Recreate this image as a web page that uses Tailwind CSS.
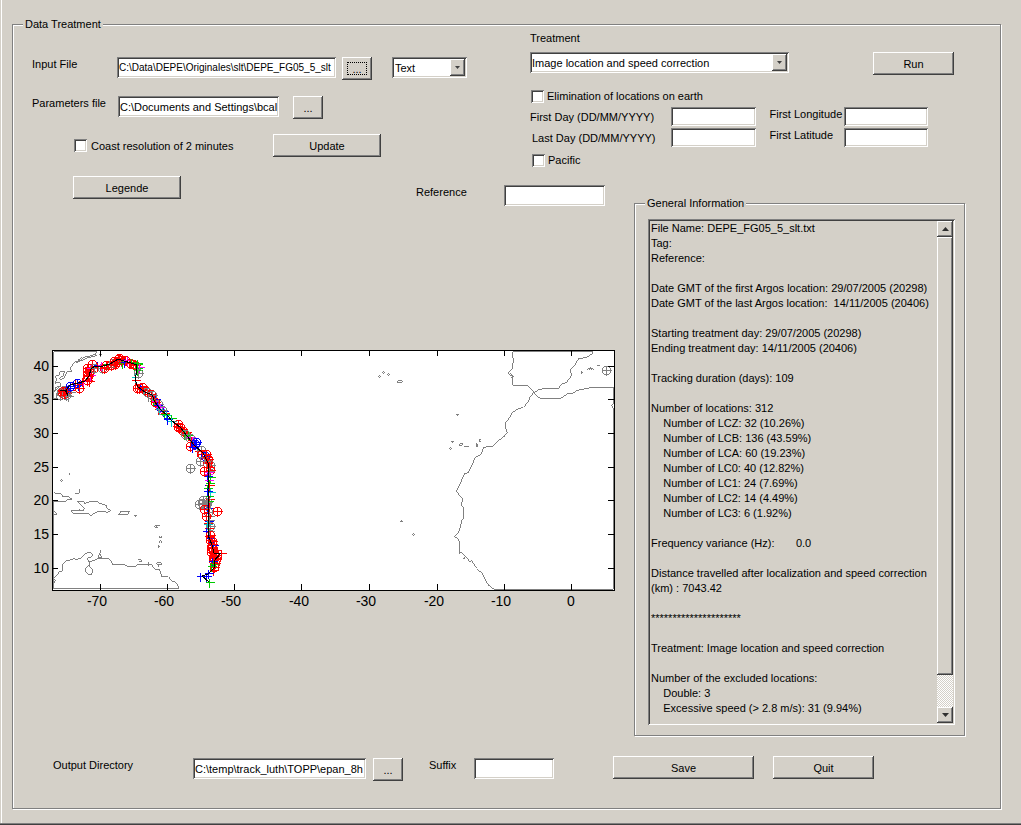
<!DOCTYPE html>
<html lang="en">
<head>
<meta charset="utf-8">
<title>Data Treatment</title>
<script src="https://cdn.jsdelivr.net/npm/@tailwindcss/browser@4"></script>
</head>
<body class="bg-[#d4d0c8]">
<main class="flex min-h-screen flex-col bg-[#d4d0c8] pt-[17px] pr-[20px] pb-[16px] pl-[12px] font-['Liberation_Sans',Arial,sans-serif] text-[11px] leading-[14px] text-black shadow-[inset_0_-1px_#404040,inset_0_-2px_#808080,inset_1px_0_#d4d0c8,inset_2px_0_#fff]">
<fieldset class="min-w-0 flex-1 border border-[#808080] shadow-[inset_1px_1px_#fff,1px_1px_#fff]">
  <legend class="ml-[10px] bg-[#d4d0c8] px-[2px]">Data Treatment</legend>

  <!-- File choices and treatment settings -->
  <div class="grid grid-cols-[517fr_470fr]">
    <div class="flex flex-col pt-[26px] pl-[19px]">
      <div class="flex items-start pr-[63px]">
        <label for="inputFile" class="w-[85px]">Input File</label>
        <input id="inputFile" type="text" value="C:\Data\DEPE\Originales\slt\DEPE_FG05_5_slt" class="h-[21px] min-w-0 flex-1 bg-white px-[2px] text-[10px] shadow-[inset_1px_1px_#808080,inset_-1px_-1px_#fff,inset_2px_2px_#404040,inset_-2px_-2px_#d4d0c8]">
        <button type="button" aria-label="Browse input file" class="ml-[6px] flex h-[23px] w-[30px] p-[5px] shadow-[inset_-1px_-1px_#404040,inset_1px_1px_#fff,inset_-2px_-2px_#808080]"><span class="flex-1 self-stretch border border-dotted border-black leading-[13px]">...</span></button>
        <div class="relative ml-[20px] w-[75px]">
          <select aria-label="Format" class="block h-[21px] w-full appearance-none bg-white px-[3px] shadow-[inset_1px_1px_#808080,inset_-1px_-1px_#fff,inset_2px_2px_#404040,inset_-2px_-2px_#d4d0c8]"><option>Text</option></select>
          <span class="pointer-events-none absolute top-[2px] right-[2px] flex h-[17px] w-[15px] items-center justify-center bg-[#d4d0c8] shadow-[inset_-1px_-1px_#404040,inset_1px_1px_#fff,inset_-2px_-2px_#808080]"><svg width="5" height="3" viewBox="0 0 5 3"><path d="M0 0H5L2.500 3Z" fill="#404040"/></svg></span>
        </div>
      </div>
      <div class="mt-[16px] flex items-start pr-[207px]">
        <label for="paramFile" class="w-[86px]">Parameters file</label>
        <input id="paramFile" type="text" value="C:\Documents and Settings\bcalmettes" class="h-[21px] min-w-0 flex-1 bg-white px-[2px] shadow-[inset_1px_1px_#808080,inset_-1px_-1px_#fff,inset_2px_2px_#404040,inset_-2px_-2px_#d4d0c8]">
        <button type="button" aria-label="Browse parameters file" class="ml-[14px] h-[23px] w-[30px] shadow-[inset_-1px_-1px_#404040,inset_1px_1px_#fff,inset_-2px_-2px_#808080]">...</button>
      </div>
      <div class="mt-[15px] flex items-center pl-[42px]">
        <label class="flex w-[199px] items-center gap-[4px]"><input type="checkbox" class="size-[13px] appearance-none bg-white shadow-[inset_1px_1px_#808080,inset_-1px_-1px_#fff,inset_2px_2px_#404040,inset_-2px_-2px_#d4d0c8]">Coast resolution of 2 minutes</label>
        <button type="button" class="h-[23px] w-[108px] shadow-[inset_-1px_-1px_#404040,inset_1px_1px_#fff,inset_-2px_-2px_#808080]">Update</button>
      </div>
    </div>

    <div class="flex flex-col items-stretch">
      <label for="treatment">Treatment</label>
      <div class="mt-[7px] flex items-start pr-[46px]">
        <div class="relative min-w-0 flex-1">
          <select id="treatment" class="block h-[21px] w-full appearance-none bg-white px-[2px] shadow-[inset_1px_1px_#808080,inset_-1px_-1px_#fff,inset_2px_2px_#404040,inset_-2px_-2px_#d4d0c8]"><option>Image location and speed correction</option></select>
          <span class="pointer-events-none absolute top-[2px] right-[2px] flex h-[17px] w-[15px] items-center justify-center bg-[#d4d0c8] shadow-[inset_-1px_-1px_#404040,inset_1px_1px_#fff,inset_-2px_-2px_#808080]"><svg width="5" height="3" viewBox="0 0 5 3"><path d="M0 0H5L2.500 3Z" fill="#404040"/></svg></span>
        </div>
        <button type="button" class="ml-[84px] h-[23px] w-[81px] shadow-[inset_-1px_-1px_#404040,inset_1px_1px_#fff,inset_-2px_-2px_#808080]">Run</button>
      </div>
      <label class="mt-[14px] flex items-center gap-[3px] pl-px"><input type="checkbox" class="size-[13px] appearance-none bg-white shadow-[inset_1px_1px_#808080,inset_-1px_-1px_#fff,inset_2px_2px_#404040,inset_-2px_-2px_#d4d0c8]">Elimination of locations on earth</label>
      <div class="mt-[4px] grid grid-cols-[141px_1fr_74px_1fr] items-start gap-y-[2px] pr-[58px]">
        <label for="firstDay" class="self-center">First Day (DD/MM/YYYY)</label>
        <input id="firstDay" type="text" class="mr-[14px] h-[19px] min-w-0 bg-white px-[3px] shadow-[inset_1px_1px_#808080,inset_-1px_-1px_#fff,inset_2px_2px_#404040,inset_-2px_-2px_#d4d0c8]">
        <label for="firstLon">First Longitude</label>
        <input id="firstLon" type="text" class="mr-[14px] h-[19px] min-w-0 bg-white px-[3px] shadow-[inset_1px_1px_#808080,inset_-1px_-1px_#fff,inset_2px_2px_#404040,inset_-2px_-2px_#d4d0c8]">
        <label for="lastDay" class="self-center pl-[2px]">Last Day (DD/MM/YYYY)</label>
        <input id="lastDay" type="text" class="mr-[14px] h-[19px] min-w-0 bg-white px-[3px] shadow-[inset_1px_1px_#808080,inset_-1px_-1px_#fff,inset_2px_2px_#404040,inset_-2px_-2px_#d4d0c8]">
        <label for="firstLat">First Latitude</label>
        <input id="firstLat" type="text" class="mr-[14px] h-[19px] min-w-0 bg-white px-[3px] shadow-[inset_1px_1px_#808080,inset_-1px_-1px_#fff,inset_2px_2px_#404040,inset_-2px_-2px_#d4d0c8]">
      </div>
      <label class="mt-[6px] flex items-center gap-[3px] pl-[2px]"><input type="checkbox" class="size-[13px] appearance-none bg-white shadow-[inset_1px_1px_#808080,inset_-1px_-1px_#fff,inset_2px_2px_#404040,inset_-2px_-2px_#d4d0c8]">Pacific</label>
    </div>
  </div>

  <!-- Map and report -->
  <div class="mt-[9px] grid grid-cols-[621fr_366fr]">
    <div>
      <div class="flex items-start pr-[29px] pl-[60px]">
        <button type="button" class="h-[23px] w-[108px] shadow-[inset_-1px_-1px_#404040,inset_1px_1px_#fff,inset_-2px_-2px_#808080]">Legende</button>
        <div class="ml-auto flex items-start pt-[9px]">
          <label for="reference" class="w-[88px]">Reference</label>
          <input id="reference" type="text" class="h-[21px] w-[101px] bg-white px-[3px] shadow-[inset_1px_1px_#808080,inset_-1px_-1px_#fff,inset_2px_2px_#404040,inset_-2px_-2px_#d4d0c8]">
        </div>
      </div>
      <div class="pt-[139px] pr-[14px] pl-[17px]">
        <svg viewBox="30 345 590 265" class="block w-full" role="img" aria-label="Map of Argos locations in the Atlantic" shape-rendering="crispEdges">
          <rect x="52" y="350" width="563" height="241" fill="#fff"/>
          <g fill="none" stroke="#808080" stroke-width="3">
            <!-- Africa, Iberia and eastern islands -->
            <g transform="translate(360 340) scale(.33333)">
              <path d="M402 748L385 735L377 722L368 702L350 685L335 662L330 666L318 650L305 637L298 640V605L292 594L283 590L292 583L300 565L305 542L311 535V502L305 497V487L310 480L300 468L289 454L300 432L313 402L325 398L335 378L345 353L362 343L372 322L400 318L415 302L432 290L442 278L437 265V248L452 228L455 218L475 207L490 202L503 188L510 172L520 158L540 175H602L625 160H638L650 152L665 148L700 142H760V190L754 197L760 204V748H402"/>
              <path d="M458 35V50L461 60L458 75V86L446 95V102L458 110V136H500L510 143L522 158L535 150L550 146H595L605 133L620 127L625 120L636 105L630 90L645 74L655 57L680 52L698 40V35H458"/>
              <path d="M449 100L455 104L460 110L453 112M58 106L61 110L57 112L55 109ZM70 95L74 98L70 101L67 98ZM85 101L89 104L85 107L82 104ZM115 122H124L128 125L124 128H115L111 125ZM288 223H297M292 226V228M274 304H281M277 306V308M271 322L275 326L271 329L268 326ZM296 314L304 318L309 309L303 311ZM312 319H326M350 310L355 315L351 320L348 315ZM360 298L364 302L358 305ZM124 540V544M120 544H128M160 580L164 584L160 587L157 584ZM313 650V656M309 655H314M664 94V101L669 98M682 89L690 84H694L703 89M686 91L691 84L696 91M712 78H719"/>
            </g>
            <!-- North American coast -->
            <g transform="translate(20 340) scale(.33333)">
              <path d="M102 35H230L227 43L210 48L190 52L182 62L165 65M230 47L205 53L188 60L170 68L175 60L185 52M165 65L150 85L155 94H142L132 114L121 120L119 113L130 107L133 94L120 95L118 105L104 110L111 119L104 130L119 126L122 138L108 142L101 158L118 140M242 43L238 45M242 47V51M236 45H246M150 400V404M123 419H127M100 35V175H115"/>
            </g>
            <!-- Antilles and South American coast -->
            <g transform="translate(20 460) scale(.33333)">
              <path d="M100 95L106 101L124 102L127 108L145 110L157 118H145L135 124H100V385H475M150 40V44M124 58L127 61L124 65L121 61ZM180 88V95L176 102H166M172 124H190L195 131L210 124H230L240 130L258 136L260 145L272 152L262 158L255 153L235 155L225 159L212 167L205 160H160L152 152H175L188 153L193 146L180 131ZM179 146V152L186 150M303 154H328L322 165H295ZM343 166H350L346 169M101 153L105 155L111 161L105 166L101 162M402 201L408 197H420M406 204H413L410 198M421 227L425 231L421 234L418 231ZM421 241L425 246L421 250L418 246ZM417 255V263M413 260H419"/>
              <path d="M100 372L106 362L100 355L112 345L118 335L128 332V312L140 302L160 298L163 294L168 300L185 293L198 280L210 276L217 281V289L203 295L205 305L222 302L235 295H265L275 305L278 314H315L325 321H345L352 315L385 312L395 314L405 328H417L425 345V350H445L455 362L467 367L476 380V386M210 305V312L198 325L197 337L205 343H215L218 330L210 322L207 314M241 270L244 274L240 278ZM240 280L234 293H245L240 283M355 300H362L366 304L356 306M386 305V319M380 313H396M410 309H424L423 314H413L410 309M417 313V320"/>
            </g>
          </g>
          <g id="fixes" fill="none" stroke-width="1"></g>
          <rect x="52.5" y="350.500" width="562" height="240" fill="none" stroke="#000"/>
          <path stroke="#000" fill="none" d="M100.500 350v6m0 234v-6M167.500 350v6m0 234v-6M234.500 350v6m0 234v-6M301.500 350v6m0 234v-6M369.500 350v6m0 234v-6M437.500 350v6m0 234v-6M504.500 350v6m0 234v-6M571.500 350v6m0 234v-6M52 366.500h6m556 0h-6M52 399.500h6m556 0h-6M52 433.500h6m556 0h-6M52 467.500h6m556 0h-6M52 500.500h6m556 0h-6M52 534.500h6m556 0h-6M52 568.500h6m556 0h-6"/>
          <g font-size="14" text-anchor="end">
            <text x="49" y="371">40</text><text x="49" y="404">35</text><text x="49" y="438">30</text><text x="49" y="472">25</text><text x="49" y="505">20</text><text x="49" y="539">15</text><text x="49" y="573">10</text>
          </g>
          <g font-size="14" text-anchor="middle">
            <text x="97" y="606">-70</text><text x="164" y="606">-60</text><text x="231" y="606">-50</text><text x="299" y="606">-40</text><text x="366" y="606">-30</text><text x="434" y="606">-20</text><text x="501" y="606">-10</text><text x="571" y="606">0</text>
          </g>
        </svg>
      </div>
    </div>

    <fieldset class="mt-[20px] mr-[35px] flex min-w-0 flex-col border border-[#808080] pt-[9px] pr-[9px] pb-[10px] pl-[13px] shadow-[inset_1px_1px_#fff,1px_1px_#fff]">
      <legend class="-ml-[3px] bg-[#d4d0c8] px-[2px]">General Information</legend>
      <div class="flex h-[506px] p-[2px] shadow-[inset_1px_1px_#808080,inset_-1px_-1px_#fff,inset_2px_2px_#404040,inset_-2px_-2px_#d4d0c8]">
        <textarea readonly aria-label="General Information" class="block h-full min-w-0 flex-1 resize-none overflow-hidden bg-transparent pl-px leading-[15px] whitespace-pre">File Name: DEPE_FG05_5_slt.txt
Tag:
Reference:

Date GMT of the first Argos location: 29/07/2005 (20298)
Date GMT of the last Argos location:  14/11/2005 (20406)

Starting treatment day: 29/07/2005 (20298)
Ending treatment day: 14/11/2005 (20406)

Tracking duration (days): 109

Number of locations: 312
    Number of LCZ: 32 (10.26%)
    Number of LCB: 136 (43.59%)
    Number of LCA: 60 (19.23%)
    Number of LC0: 40 (12.82%)
    Number of LC1: 24 (7.69%)
    Number of LC2: 14 (4.49%)
    Number of LC3: 6 (1.92%)

Frequency variance (Hz):       0.0

Distance travelled after localization and speed correction
(km) : 7043.42

*********************

Treatment: Image location and speed correction

Number of the excluded locations:
    Double: 3
    Excessive speed (&gt; 2.8 m/s): 31 (9.94%)</textarea>
        <div class="flex w-[16px] flex-col bg-[repeating-conic-gradient(#fff_0_25%,#d4d0c8_0_50%)] bg-[length:2px_2px]">
          <button type="button" aria-label="Scroll up" class="flex h-[16px] items-center justify-center bg-[#d4d0c8] shadow-[inset_-1px_-1px_#404040,inset_1px_1px_#fff,inset_-2px_-2px_#808080]"><svg width="7" height="4" viewBox="0 0 7 4"><path d="M0 4H7L3.500 0Z" fill="#303030"/></svg></button>
          <div class="h-[438px] bg-[#d4d0c8] shadow-[inset_-1px_-1px_#404040,inset_1px_1px_#fff,inset_-2px_-2px_#808080]"></div>
          <button type="button" aria-label="Scroll down" class="mt-auto flex h-[16px] items-center justify-center bg-[#d4d0c8] shadow-[inset_-1px_-1px_#404040,inset_1px_1px_#fff,inset_-2px_-2px_#808080]"><svg width="7" height="4" viewBox="0 0 7 4"><path d="M0 0H7L3.500 4Z" fill="#303030"/></svg></button>
        </div>
      </div>
    </fieldset>
  </div>

  <!-- Output -->
  <div class="mt-[20px] flex items-start pr-[126px] pb-[27px] pl-[40px]">
    <div class="flex min-w-0 flex-1 items-start pt-[2px]">
      <label for="outDir" class="w-[140px]">Output Directory</label>
      <input id="outDir" type="text" value="C:\temp\track_luth\TOPP\epan_8h" class="h-[21px] min-w-0 flex-1 bg-white px-[2px] shadow-[inset_1px_1px_#808080,inset_-1px_-1px_#fff,inset_2px_2px_#404040,inset_-2px_-2px_#d4d0c8]">
      <button type="button" aria-label="Browse output directory" class="ml-[7px] h-[23px] w-[30px] shadow-[inset_-1px_-1px_#404040,inset_1px_1px_#fff,inset_-2px_-2px_#808080]">...</button>
      <label for="suffix" class="ml-[26px] w-[45px]">Suffix</label>
      <input id="suffix" type="text" class="h-[21px] w-[80px] bg-white px-[3px] shadow-[inset_1px_1px_#808080,inset_-1px_-1px_#fff,inset_2px_2px_#404040,inset_-2px_-2px_#d4d0c8]">
    </div>
    <button type="button" class="ml-[59px] h-[23px] w-[141px] shadow-[inset_-1px_-1px_#404040,inset_1px_1px_#fff,inset_-2px_-2px_#808080]">Save</button>
    <button type="button" class="ml-[19px] h-[23px] w-[101px] shadow-[inset_-1px_-1px_#404040,inset_1px_1px_#fff,inset_-2px_-2px_#808080]">Quit</button>
  </div>
</fieldset>
</main>
<script>
// Argos fixes: letter = colour, capital = circled cross, lower case = plain cross.
const colours = { r: '#f00', g: '#0c0', b: '#00f', m: '#f0f', c: '#0cc', k: '#808080' };
const group = document.getElementById('fixes');
const add = (d, stroke) => {
  const p = document.createElementNS('http://www.w3.org/2000/svg', 'path');
  p.setAttribute('d', d); p.setAttribute('stroke', stroke); group.appendChild(p);
};
const mark = (x, y, t) => {
  x += .5; y += .5;
  let d = `M${x - 4} ${y}h9M${x} ${y - 4}v9`;
  if (t === t.toUpperCase()) d += `M${x - 4} ${y}v-2l2 -2h4l2 2v4l-2 2h-4l-2 -2z`;
  add(d, colours[t.toLowerCase()]);
};
const legs = [
  [[60,393],[67,391],'KRKRKrk'], [[64,392],[70,390],'RKRkbr'], [[70,384],[78,383],'BrB'], [[78,383],[87,380],'brmr'],
  [[87,378],[89,369],'RRRmRrRR'], [[89,369],[93,366],'RrmrR'], [[94,366],[104,367],'KbrKmr'], [[104,366],[116,362],'RgRRrKRR'],
  [[116,360],[121,360],'RRrkRR'], [[122,361],[138,364],'gRbrmRRgRgg'], [[137,366],[138,370],'gmg'], [[135,378],[134,378],'rc'],
  [[137,386],[146,391],'RbRcRRK'], [[148,394],[152,396],'kRr'], [[153,399],[158,406],'gbmKRbm'], [[158,407],[167,416],'rmcbKrcgb'],
  [[167,417],[172,421],'bgc'], [[176,424],[184,432],'rRRrRRr'], [[184,432],[195,443],'grKmgKmrbB'], [[198,449],[206,458],'rKRrB'],
  [[207,458],[209,469],'kRrKRrR'], [[208,470],[208,482],'mkmgbmg'], [[208,483],[208,498],'brgcbgr'], [[207,500],[208,517],'KgKrbKkR'],
  [[208,519],[208,532],'bkrKcrkb'], [[208,534],[212,544],'rRbRRr'], [[212,545],[214,558],'RbRrRRRRbrRR'], [[213,558],[213,568],'RRrRbgRgr']
];
const sway = [0, 1, -1, 2, -1, 0, 1, -2];
legs.forEach(([a, b, s]) => [...s].forEach((t, i) => {
  const f = s.length > 1 ? i / (s.length - 1) : 0;
  mark(Math.round(a[0] + (b[0] - a[0]) * f) + sway[i % 8], Math.round(a[1] + (b[1] - a[1]) * f) + sway[(i + 3) % 8], t);
}));
[[66,395,'K'],[68,396,'k'],[63,391,'R'],[79,388,'R'],[138,373,'K'],[152,395,'K'],[190,468,'K'],[200,461,'K'],[190,446,'R'],[192,447,'b'],
 [195,444,'B'],[206,454,'R'],[204,471,'R'],[203,500,'K'],[199,504,'K'],[202,503,'K'],[204,509,'R'],[217,511,'R'],[606,370,'K'],
 [221,553,'r'],[208,573,'b'],[206,576,'b'],[200,576,'b'],[209,582,'g']].forEach(p => mark(...p));
// Retained track
add('M60 391L65 390L68 396L66 390L70 385L78 383L85 381L89 376L91 369L95 366H103L110 364L118 359L124 361L131 363L137 365L136 375L135 380L138 387L145 392L152 395L155 402L160 409L168 416L172 421L180 427L187 436L194 445L203 453L209 465L208 490L209 505L208 520V535L212 545L214 553H221L214 561V568L208 574L202 576L209 582', '#000');
</script>
</body>
</html>
